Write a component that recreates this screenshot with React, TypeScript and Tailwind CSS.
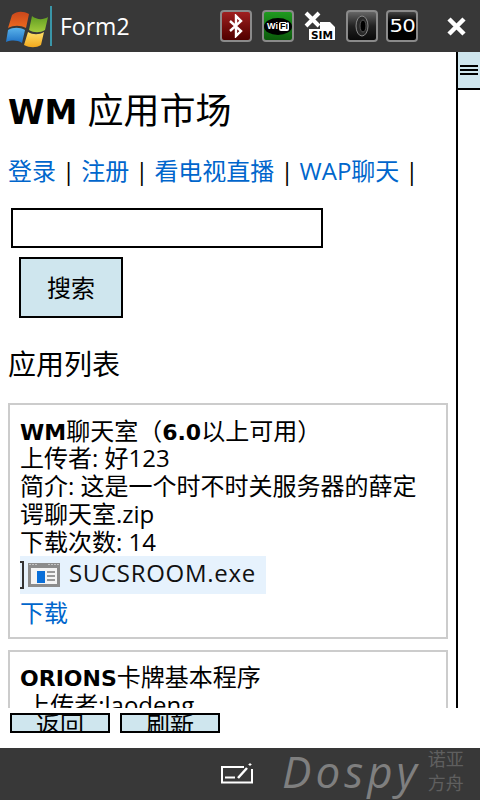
const cjk = "font-['Open_Sans','Noto_Sans_CJK_SC',sans-serif]";
const heavy = "font-bold font-['DejaVu_Sans',sans-serif]";

function WindowsLogo() {
  return (
    <svg width="46" height="44" viewBox="0 0 46 44">
      <defs>
        <linearGradient id="winRed" x1="0" y1="0" x2="0" y2="1">
          <stop offset="0" stopColor="#c9471c" />
          <stop offset="1" stopColor="#ee6a1e" />
        </linearGradient>
        <linearGradient id="winGreen" x1="0" y1="0" x2="0" y2="1">
          <stop offset="0" stopColor="#5f9c22" />
          <stop offset="1" stopColor="#a3cc3c" />
        </linearGradient>
        <linearGradient id="winBlue" x1="0" y1="0" x2="0" y2="1">
          <stop offset="0" stopColor="#5ab3ea" />
          <stop offset="1" stopColor="#1c6fc4" />
        </linearGradient>
        <linearGradient id="winYellow" x1="0" y1="0" x2="0" y2="1">
          <stop offset="0" stopColor="#fde06a" />
          <stop offset="1" stopColor="#f3a81c" />
        </linearGradient>
      </defs>
      <path d="M9 11 C14 7 20 7 26 10 L23 24 C17 21 11 21 5 24 Z" fill="url(#winRed)" />
      <path d="M29 12 C34 16 40 16 45 13 L42 26 C37 29 31 29 26 26 Z" fill="url(#winGreen)" />
      <path d="M5 26 C10 23 17 23 22 26 L19 39 C14 36 9 36 3 38 Z" fill="url(#winBlue)" />
      <path d="M25 28 C30 31 36 31 41 28 L38 41 C33 44 27 44 21 41 Z" fill="url(#winYellow)" />
    </svg>
  );
}

function StatusTile({ bg, children }: { bg: string; children: React.ReactNode }) {
  return (
    <div className={`flex h-8 w-8 items-center justify-center overflow-hidden rounded-[4px] border-2 border-[#8a8a8a] ${bg}`}>
      {children}
    </div>
  );
}

function StatusIcons() {
  return (
    <div className="flex items-center">
      <StatusTile bg="bg-gradient-to-b from-[#a02020] to-[#500000]">
        <svg width="14" height="24" viewBox="0 0 14 24" fill="none" stroke="#fff" strokeWidth="2.4">
          <path d="M1 7 L12 17 L7 22 V2 L12 7 L1 17" />
        </svg>
      </StatusTile>
      <div className="ml-[10px]">
        <StatusTile bg="bg-gradient-to-b from-[#1f9a1f] to-[#0b5a0b]">
          <div className="flex h-[17px] w-[28px] items-center justify-center gap-[1px] rounded-[50%] bg-black text-[9px] font-bold leading-none text-white font-['Liberation_Sans',sans-serif]">
            <span>Wi</span>
            <span className="rounded-[2px] bg-white px-[1px] text-black">Fi</span>
          </div>
        </StatusTile>
      </div>
      <svg className="ml-[10px]" width="32" height="32" viewBox="0 0 32 32">
        <path d="M2 3 L15 16 M15 3 L2 16" stroke="#fff" strokeWidth="4" />
        <path d="M5 19 H16 V12 H26 L31 17 V30 H5 Z" fill="#fff" />
        <text x="7" y="28.500" fontSize="11" fontWeight="bold" fontFamily="DejaVu Sans" textLength="22" lengthAdjust="spacingAndGlyphs" fill="#000">SIM</text>
      </svg>
      <div className="ml-[10px]">
        <StatusTile bg="bg-gradient-to-b from-[#666666] via-[#222222] to-[#0a0a0a]">
          <svg width="18" height="26" viewBox="0 0 18 26">
            <ellipse cx="9" cy="13" rx="6" ry="10" fill="#2a2a2a" stroke="#8a8a8a" strokeWidth="1" />
            <ellipse cx="10" cy="13" rx="3" ry="6" fill="#000" stroke="#555" strokeWidth="1" />
          </svg>
        </StatusTile>
      </div>
      <div className="ml-[8px]">
        <StatusTile bg="bg-gradient-to-b from-[#444444] via-black to-black">
          <span className="scale-x-125 text-[17px] leading-none tracking-[-0.5px] text-white font-['DejaVu_Sans',sans-serif]">50</span>
        </StatusTile>
      </div>
      <svg className="ml-[29px]" width="19" height="19" viewBox="0 0 19 19">
        <path d="M2 2 L17 17 M17 2 L2 17" stroke="#fff" strokeWidth="4.500" />
      </svg>
    </div>
  );
}

function Sep() {
  return <span className="mx-[6px]">|</span>;
}

export default function App() {
  return (
    <div className={`flex h-[800px] w-[480px] flex-col overflow-hidden bg-white text-black ${cjk}`}>
      {/* Title bar */}
      <header className="flex h-[52px] shrink-0 items-center bg-[#383838]">
        <div className="ml-[3px]"><WindowsLogo /></div>
        <div className="ml-[1px] h-10 w-[2px] bg-[#3a96a8]" />
        <span className="ml-[8px] text-[23px] leading-none text-white">Form2</span>
        <div className="ml-auto mr-[14px]"><StatusIcons /></div>
      </header>

      {/* Page + scrollbar */}
      <div className="flex h-[656px] shrink-0">
        <main className="w-[456px] overflow-hidden pl-2">
          <h1 className="mt-[36px] h-[46px] text-[36px] leading-[46px]">
            <b className={`mr-[1px] text-[33px] ${heavy}`}>WM</b> 应用市场
          </h1>
          <nav className="mt-[21px] text-[24px] leading-[32px]">
            <a className="text-[#0066cc]">登录</a><Sep />
            <a className="text-[#0066cc]">注册</a><Sep />
            <a className="text-[#0066cc]">看电视直播</a><Sep />
            <a className="text-[#0066cc]">WAP聊天</a><Sep />
          </nav>
          <input className="ml-[3px] mt-[21px] block h-[40px] w-[312px] border-2 border-black bg-white" />
          <button className="ml-[11px] mt-[9px] block h-[61px] w-[104px] border-2 border-black bg-[#cfe6ee] text-[24px]">
            搜索
          </button>
          <h2 className="mt-[27px] text-[28px] leading-[38px]">应用列表</h2>

          <section className="mt-[20px] h-[236px] w-[440px] border-2 border-[#cccccc] pl-[10px] pt-[11px] text-[24px] leading-[28px]">
            <p className="h-[28px]">
              <b className={`text-[22px] ${heavy}`}>WM</b>聊天室
              <span className="font-['Noto_Sans_CJK_TC',sans-serif]">（</span>
              <b className={`text-[22px] ${heavy}`}>6.0</b>以上可用
              <span className="font-['Noto_Sans_CJK_TC',sans-serif]">）</span>
            </p>
            <p>上传者: 好123</p>
            <p>简介: 这是一个时不时关服务器的薛定</p>
            <p>谔聊天室.zip</p>
            <p>下载次数: 14</p>
            <div className="flex h-[38px] w-[246px] items-center bg-[#e6f2fd]">
              <span className="box-content h-6 w-[2px] border-y-2 border-r-2 border-[#333333]" />
              <svg className="ml-[4px]" width="32" height="24" viewBox="0 0 32 24">
                <rect x="0" y="0" width="32" height="24" fill="#8c8c8c" />
                <path d="M20 1.500 H31 M1 1.500 H10" stroke="#c4c4c4" strokeWidth="1" strokeDasharray="2 1" />
                <rect x="3" y="5" width="26" height="16" fill="#f4f4f4" />
                <rect x="9" y="8" width="8" height="12" fill="#0a6fd8" />
                <path d="M19 9 H27 M19 13 H27 M19 17 H27" stroke="#999" strokeWidth="2" />
              </svg>
              <span className="ml-[9px] -translate-y-[2px] text-[24px] tracking-[0.7px] text-[#111]">SUCSROOM.exe</span>
            </div>
            <a className="mt-[5px] block text-[#0066cc]">下载</a>
          </section>

          <section className="mt-[11px] h-[100px] w-[440px] border-2 border-[#cccccc] pl-[10px] pt-[11px] text-[24px] leading-[28px]">
            <p className="h-[28px]"><b className={`text-[22px] ${heavy}`}>ORIONS</b>卡牌基本程序</p>
            <p>&nbsp;上传者:laodeng</p>
          </section>
        </main>
        <aside className="flex w-[24px] flex-col border-l-2 border-black">
          <div className="flex h-[38px] flex-col items-center justify-center gap-[2px] border-b-2 border-black bg-[#cfe6ee]">
            <div className="h-[2px] w-[18px] bg-black" />
            <div className="h-[2px] w-[18px] bg-black" />
            <div className="h-[2px] w-[18px] bg-black" />
          </div>
        </aside>
      </div>

      {/* Soft keys row */}
      <div className="flex h-[40px] shrink-0 gap-[10px] pl-[10px] pt-[5px]">
        <button className="h-[20px] w-[100px] overflow-hidden border-2 border-black bg-[#cfe6ee] text-[24px] leading-[20px]">返回</button>
        <button className="h-[20px] w-[100px] overflow-hidden border-2 border-black bg-[#cfe6ee] text-[24px] leading-[20px]">刷新</button>
      </div>

      {/* Bottom bar */}
      <footer className="flex h-[52px] shrink-0 items-center bg-[#383838]">
        <svg className="ml-[221px]" width="32" height="22" viewBox="0 0 32 22" fill="none" stroke="#fff">
          <path d="M23 4 H1 V19.500 H31 V6" strokeWidth="2" />
          <path d="M4 14.500 H14" strokeWidth="2" />
          <path d="M17 15 L26 5" strokeWidth="2.500" />
          <path d="M29 0 V3 M27.500 1.500 H30.500" strokeWidth="1" />
        </svg>
        <span className="ml-[29px] -translate-y-[3px] text-[44px] italic leading-none tracking-[4px] text-[#7f7f7f]">Dospy</span>
        <div className="ml-[7px] -translate-y-[3px] text-[18px] leading-[24px] text-[#5f5f5f]">
          <div>诺亚</div>
          <div>方舟</div>
        </div>
      </footer>
    </div>
  );
}
